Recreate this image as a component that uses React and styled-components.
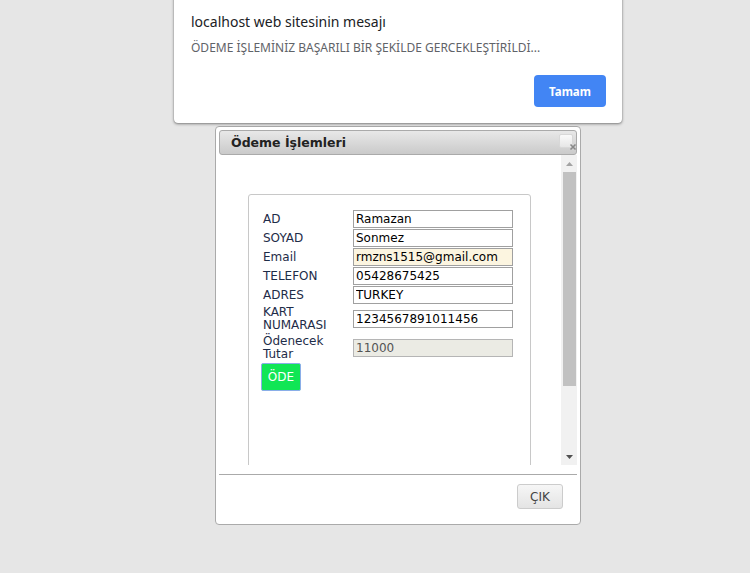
import React from "react";
import styled, { createGlobalStyle } from "styled-components";

const GlobalStyle = createGlobalStyle`
  html, body {
    margin: 0;
    padding: 0;
    background: #e6e6e6;
  }
  body {
    font-family: "DejaVu Sans", Verdana, sans-serif;
  }
`;

const Page = styled.div`
  position: relative;
  width: 750px;
  height: 573px;
  overflow: hidden;
  padding: 126px 0 0 215px;
  box-sizing: border-box;
`;

const AlertBox = styled.div`
  position: absolute;
  left: 174px;
  top: -8px;
  width: 448px;
  height: 131px;
  box-sizing: border-box;
  background: #fff;
  border-radius: 0 0 4px 4px;
  box-shadow: 0 1px 3px rgba(0, 0, 0, 0.45), 0 0 1px rgba(0, 0, 0, 0.4);
  padding: 22px 16px 0 17px;
  font-family: "Noto Sans", "Open Sans", sans-serif;
  display: flex;
  flex-direction: column;
  z-index: 10;
`;

const AlertTitle = styled.div`
  font-size: 14px;
  color: #202124;
  line-height: 16px;
`;

const AlertMessage = styled.div`
  margin-top: 11px;
  font-size: 12px;
  color: #5f6368;
  line-height: 14px;
`;

const AlertActions = styled.div`
  display: flex;
  justify-content: flex-end;
  margin-top: 20px;
`;

const PrimaryButton = styled.button`
  width: 72px;
  height: 32px;
  border: none;
  border-radius: 4px;
  background: #4285f4;
  color: #fff;
  font-family: "Noto Sans", "Open Sans", sans-serif;
  font-weight: bold;
  font-size: 11.5px;
  cursor: pointer;
`;

const Window = styled.div`
  width: 366px;
  height: 399px;
  box-sizing: border-box;
  background: #fff;
  border: 1px solid #aaaaaa;
  border-radius: 4px;
  padding: 3px;
  display: flex;
  flex-direction: column;
`;

const TitleBar = styled.div`
  position: relative;
  height: 25px;
  box-sizing: border-box;
  border: 1px solid #aaaaaa;
  border-radius: 3px;
  background: linear-gradient(#e8e8e8, #cacaca);
  display: flex;
  align-items: center;
  padding-left: 11px;
  font-weight: bold;
  font-size: 12.5px;
  color: #222;
`;

const CloseBox = styled.span`
  position: absolute;
  right: 3px;
  top: 3px;
  width: 12px;
  height: 12px;
  border: 1px solid #d8d8d8;
  border-radius: 2px;
  background: linear-gradient(#fafafa, #e6e6e6);
`;

const CloseMark = styled.svg`
  position: absolute;
  right: -1px;
  bottom: 3px;
  width: 8px;
  height: 8px;
`;

const ContentRow = styled.div`
  height: 310px;
  display: flex;
`;

const ScrollArea = styled.div`
  flex: 1;
  overflow: hidden;
  box-sizing: border-box;
  padding: 39px 0 0 29px;
`;

const Scrollbar = styled.div`
  width: 16px;
  background: #f1f1f1;
  display: flex;
  flex-direction: column;
`;

const ScrollArrow = styled.div`
  height: 17px;
  display: flex;
  align-items: center;
  justify-content: center;
`;

const ScrollTrack = styled.div`
  flex: 1;
  padding: 0 1px 0 2px;
`;

const ScrollThumb = styled.div`
  height: 214px;
  background: #c1c1c1;
`;

const Fieldset = styled.div`
  width: 283px;
  height: 340px;
  box-sizing: border-box;
  border: 1px solid #c8c8c8;
  border-radius: 3px;
  padding: 15px 0 0 14px;
`;

const FormGrid = styled.div`
  display: grid;
  grid-template-columns: 90px 160px;
  row-gap: 1px;
  align-items: center;
`;

const Label = styled.label`
  font-size: 12px;
  line-height: 13px;
  color: #1e2c48;
  margin-top: ${(p) => p.$offset || 0}px;
`;

const Field = styled.input`
  width: 160px;
  height: 18px;
  box-sizing: border-box;
  border: 1px solid #a0a0a0;
  padding: 0 2px;
  font-family: "DejaVu Sans", Verdana, sans-serif;
  font-size: 12px;
  color: #000;
  background: ${(p) => p.$bg || "#fff"};
  outline: none;
  margin-top: ${(p) => p.$offset || 0}px;

  &:disabled {
    background: #ebebe4;
    color: #545454;
    border-color: #b5b5b5;
  }
`;

const PayButton = styled.button`
  margin: 1px 0 0 -2px;
  width: 40px;
  height: 28px;
  border: 1px solid #8aaee8;
  border-radius: 2px;
  background: #11e655;
  color: #fff;
  font-family: "DejaVu Sans", Verdana, sans-serif;
  font-size: 12px;
  padding: 0;
  cursor: pointer;
`;

const Footer = styled.div`
  margin-top: 9px;
  border-top: 1px solid #aaaaaa;
  display: flex;
  justify-content: flex-end;
  padding: 9px 14px 0 0;
`;

const ExitButton = styled.button`
  width: 46px;
  height: 25px;
  border: 1px solid #cccccc;
  border-radius: 3px;
  background: linear-gradient(#f6f6f6, #e4e4e4);
  color: #444;
  font-family: "DejaVu Sans", Verdana, sans-serif;
  font-size: 12px;
  padding: 0;
  cursor: pointer;
`;

const fields = [
  { label: "AD", value: "Ramazan" },
  { label: "SOYAD", value: "Sonmez" },
  { label: "Email", value: "rmzns1515@gmail.com", bg: "#fcf5e0" },
  { label: "TELEFON", value: "05428675425" },
  { label: "ADRES", value: "TURKEY" },
  { label: "KART NUMARASI", value: "1234567891011456", offset: 1 },
  { label: "Ödenecek Tutar", value: "11000", disabled: true, offset: 2 },
];

const Arrow = ({ down, color }) => (
  <svg width="7" height="4" viewBox="0 0 7 4">
    <path d={down ? "M0 0 L7 0 L3.5 4 Z" : "M0 4 L7 4 L3.5 0 Z"} fill={color} />
  </svg>
);

export default function App() {
  return (
    <>
      <GlobalStyle />
      <Page>
        <AlertBox>
          <AlertTitle>localhost web sitesinin mesajı</AlertTitle>
          <AlertMessage>ÖDEME İŞLEMİNİZ BAŞARILI BİR ŞEKİLDE GERCEKLEŞTİRİLDİ...</AlertMessage>
          <AlertActions>
            <PrimaryButton>Tamam</PrimaryButton>
          </AlertActions>
        </AlertBox>

        <Window>
          <TitleBar>
            Ödeme İşlemleri
            <CloseBox />
            <CloseMark viewBox="0 0 8 8">
              <path d="M1.5 1.5 L6.5 6.5 M6.5 1.5 L1.5 6.5" stroke="#8a8a8a" strokeWidth="1.6" />
            </CloseMark>
          </TitleBar>
          <ContentRow>
            <ScrollArea>
              <Fieldset>
                <FormGrid>
                  {fields.map((f) => (
                    <React.Fragment key={f.label}>
                      <Label $offset={f.offset}>{f.label}</Label>
                      <Field
                        defaultValue={f.value}
                        disabled={f.disabled}
                        $bg={f.bg}
                        $offset={f.offset}
                      />
                    </React.Fragment>
                  ))}
                  <PayButton>ÖDE</PayButton>
                </FormGrid>
              </Fieldset>
            </ScrollArea>
            <Scrollbar>
              <ScrollArrow>
                <Arrow color="#a3a3a3" />
              </ScrollArrow>
              <ScrollTrack>
                <ScrollThumb />
              </ScrollTrack>
              <ScrollArrow>
                <Arrow down color="#505050" />
              </ScrollArrow>
            </Scrollbar>
          </ContentRow>
          <Footer>
            <ExitButton>ÇIK</ExitButton>
          </Footer>
        </Window>
      </Page>
    </>
  );
}
